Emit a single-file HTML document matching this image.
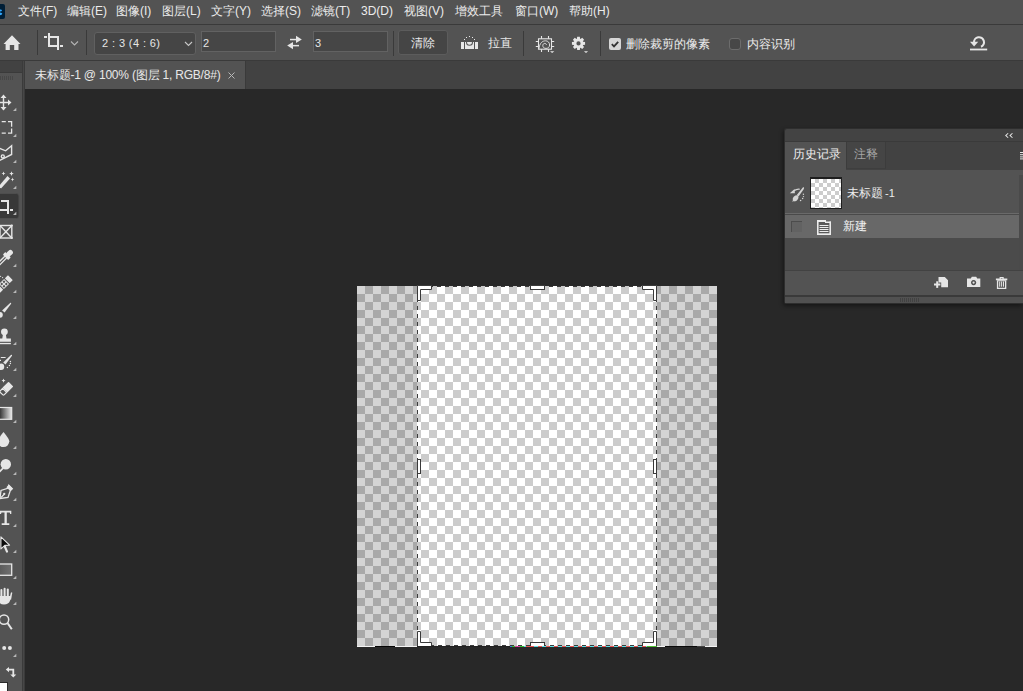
<!DOCTYPE html>
<html><head><meta charset="utf-8">
<style>
*{margin:0;padding:0;box-sizing:border-box}
html,body{width:1023px;height:691px;overflow:hidden;background:#282828;font-family:"Liberation Sans",sans-serif;color:#e6e6e6;font-weight:500}
.abs{position:absolute}
#menubar{position:absolute;left:0;top:0;width:1023px;height:25px;background:#535353;border-bottom:1px solid #3a3a3a}
#menubar span{position:absolute;top:3px;font-size:12px;line-height:16px;white-space:nowrap;color:#ececec}
#opts{position:absolute;left:0;top:25px;width:1023px;height:36px;background:#535353;border-bottom:1px solid #3a3a3a}
#tabs{position:absolute;left:0;top:61px;width:1023px;height:28px;background:#424242}
#tab1{position:absolute;left:25px;top:61px;width:221px;height:28px;background:#535353;border-right:1px solid #3a3a3a}
#tools{position:absolute;left:0;top:61px;width:25px;height:630px;background:#535353;border-right:3px solid #3b3b3b}
#tools:after{content:"";position:absolute;left:23px;top:0;width:1px;height:630px;background:#474747}
#toolshead{position:absolute;left:0;top:61px;width:22px;height:12px;background:#424242;border-bottom:1px solid #3a3a3a}
.div{position:absolute;width:1px;background:#3c3c3c}
.field{position:absolute;background:#454545;border:1px solid #3a3a3a;border-radius:2px}
.txt{position:absolute;white-space:nowrap;font-size:12px;line-height:16px}
</style></head><body>
<div id="menubar">
  <div class="abs" style="left:0;top:4px;width:5px;height:15px;background:#001e36;border-radius:0 2px 2px 0"></div><svg class="abs" style="left:0;top:0" width="6" height="24"><path d="M0,9.5 Q1.8,9.3 2,10.6 Q1.8,11.4 0,11.5 Z M0,12.4 Q2.3,12.6 2.3,13.8 Q2.1,15.2 0,15.2 Z" fill="#31a8ff"/></svg>
  <span style="left:18px">文件(F)</span>
  <span style="left:67px">编辑(E)</span>
  <span style="left:116px">图像(I)</span>
  <span style="left:162px">图层(L)</span>
  <span style="left:211px">文字(Y)</span>
  <span style="left:261px">选择(S)</span>
  <span style="left:311px">滤镜(T)</span>
  <span style="left:361px">3D(D)</span>
  <span style="left:404px">视图(V)</span>
  <span style="left:455px">增效工具</span>
  <span style="left:515px">窗口(W)</span>
  <span style="left:569px">帮助(H)</span>
</div>
<div id="opts">
  <svg class="abs" style="left:0;top:0" width="1023" height="36" viewBox="0 25 1023 36">
    <path d="M3.5,44 L12,35.3 L20.5,44 L18.5,44 L18.5,50 L14.2,50 L14.2,45 L9.8,45 L9.8,50 L5.6,50 L5.6,44 Z" fill="#e6e6e6"/>
    <rect x="37" y="30" width="1" height="25" fill="#3a3a3a"/>
    <g fill="#e6e6e6">
      <rect x="48" y="33" width="2" height="14"/><rect x="44" y="36" width="3" height="2"/><rect x="48" y="36" width="11" height="2"/>
      <rect x="57" y="36" width="2" height="14"/><rect x="48" y="45" width="9" height="2"/><rect x="60" y="45" width="3" height="2"/>
    </g>
    <path d="M71,41.5 L74.5,45 L78,41.5" stroke="#b4b4b4" stroke-width="1.1" fill="none"/>
    <rect x="86" y="30" width="1" height="25" fill="#3a3a3a"/>
    <path d="M185,42 L188.5,45.5 L192,42" stroke="#c8c8c8" stroke-width="1.1" fill="none"/>
    <g fill="#e6e6e6">
      <rect x="290" y="38.8" width="6.5" height="1.5"/><path d="M296,35.8 L301.8,39.5 L296,43 Z"/>
      <rect x="292.5" y="44.9" width="6.5" height="1.5"/><path d="M293,41.9 L287.2,45.6 L293,49.2 Z"/>
    </g>
    <g fill="#e8e8e8">
      <rect x="461" y="42" width="3" height="7"/><rect x="465" y="42" width="9" height="7"/><rect x="475" y="42" width="3" height="7"/>
      <rect x="464" y="39" width="1" height="1"/><rect x="466" y="37" width="1" height="1"/><rect x="469" y="36" width="1" height="1"/><rect x="472" y="37" width="1" height="1"/><rect x="474" y="39" width="1" height="1"/>
    </g>
    <path d="M466.5,42 Q466.5,45.3 469.5,45.3 Q472.5,45.3 472.5,42" stroke="#5a5a5a" stroke-width="1.1" fill="none"/>
    <g fill="none" stroke="#e6e6e6" stroke-width="1.1">
      <rect x="538.5" y="38.8" width="13" height="10.4"/>
      <path d="M535.8,41.5 H538.5 M535.8,46.5 H538.5 M551.5,41.5 H554.2 M551.5,46.5 H554.2 M541.5,35.9 V38.8 M548.5,35.9 V38.8 M541.5,49.2 V52 M548.5,49.2 V52"/>
      <path d="M538.9,49 C539.5,43 542.5,40.8 545.5,40.8 C548,40.8 549.6,42.6 549.6,45 C549.6,47.2 548,48.4 546,48.4 C544,48.4 542.8,47.2 542.8,45.5 C542.8,44.2 543.7,43.4 544.8,43.4 C545.8,43.4 546.4,44.1 546.4,45" stroke-width="1" stroke="#dcdcdc"/>
    </g>
    <path d="M550,51.2 L554.3,51.2 L552.15,53 Z" fill="#e6e6e6"/>
    <g fill="#e6e6e6">
      <path d="M583.03,41.80 L585.07,42.07 L585.07,44.73 L583.03,45.00 L582.83,45.47 L584.08,47.10 L582.20,48.98 L580.57,47.73 L580.10,47.93 L579.83,49.97 L577.17,49.97 L576.90,47.93 L576.43,47.73 L574.80,48.98 L572.92,47.10 L574.17,45.47 L573.97,45.00 L571.93,44.73 L571.93,42.07 L573.97,41.80 L574.17,41.33 L572.92,39.70 L574.80,37.82 L576.43,39.07 L576.90,38.87 L577.17,36.83 L579.83,36.83 L580.10,38.87 L580.57,39.07 L582.20,37.82 L584.08,39.70 L582.83,41.33 Z M580.60,43.40 A2.1,2.1 0 1 0 576.40,43.40 A2.1,2.1 0 1 0 580.60,43.40 Z" fill-rule="evenodd"/>
      <path d="M583.9,51.2 L588.1,51.2 L586,53 Z"/>
    </g>
    <rect x="393" y="31" width="1" height="25" fill="#3a3a3a"/>
    <rect x="523" y="31" width="1" height="25" fill="#3a3a3a"/>
    <rect x="600" y="31" width="1" height="25" fill="#3a3a3a"/>
    <path d="M974,42.5 A5,5 0 1 1 981,46.8" fill="none" stroke="#e6e6e6" stroke-width="2.1"/>
    <path d="M970,41.8 L978.2,41.8 L974.1,46.6 Z" fill="#e6e6e6"/>
    <rect x="970" y="48.6" width="17.2" height="1.8" fill="#e6e6e6"/>
  </svg>
  <div class="field" style="left:94px;top:7px;width:102px;height:23px;border-radius:3px;background:#454545;border-color:#606060"></div>
  <span class="txt" style="left:102px;top:10px;color:#e6e6e6;font-size:11px;letter-spacing:0.4px">2 : 3 (4 : 6)</span><svg class="abs" style="left:0;top:0" width="200" height="36" viewBox="0 25 200 36"><path d="M185,42 L188.5,45.5 L192,42" stroke="#c8c8c8" stroke-width="1.1" fill="none"/></svg>
  <div class="field" style="left:201px;top:6px;width:75px;height:21px;border-radius:0;background:#464646;border-color:#626262"></div>
  <span class="txt" style="left:203px;top:10px;color:#e6e6e6;font-size:11px">2</span>
  <div class="field" style="left:313px;top:6px;width:75px;height:21px;border-radius:0;background:#464646;border-color:#626262"></div>
  <span class="txt" style="left:315px;top:10px;color:#e6e6e6;font-size:11px">3</span>
  <div class="field" style="left:398px;top:5px;width:50px;height:25px;border-radius:3px;background:#454545;border:1.5px solid #5c5c5c"></div>
  <span class="txt" style="left:411px;top:10px;color:#ececec">清除</span>
  <span class="txt" style="left:488px;top:10px;color:#e6e6e6">拉直</span>
  <div class="abs" style="left:609px;top:13px;width:12px;height:12px;border-radius:2px;background:#d6d6d6"></div>
  <svg class="abs" style="left:609px;top:13px" width="12" height="12"><path d="M2.8,6.2 L5,8.4 L9.2,3.8" stroke="#333" stroke-width="1.8" fill="none"/></svg>
  <span class="txt" style="left:626px;top:11px;color:#ececec">删除裁剪的像素</span>
  <div class="abs" style="left:729px;top:13px;width:12px;height:12px;border-radius:3px;background:#474747;border:1.5px solid #6c6c6c"></div>
  <span class="txt" style="left:747px;top:11px;color:#ececec">内容识别</span>
</div>
<div id="tabs"></div>
<div id="tab1"><span class="txt" style="left:10px;top:6px;color:#e8e8e8;letter-spacing:-0.2px">未标题-1 @ 100% (图层 1, RGB/8#)</span><svg class="abs" style="left:202px;top:10px" width="10" height="10"><path d="M1.5,1.5 L7.5,7.5 M7.5,1.5 L1.5,7.5" stroke="#b8b8b8" stroke-width="1"/></svg></div>

<div class="abs" style="left:357px;top:286px;width:360px;height:360px;background:conic-gradient(#cccccc 25%,#ffffff 0 50%,#cccccc 0 75%,#ffffff 0) 0 0/16px 16px"></div>
<div class="abs" style="left:357px;top:286px;width:60px;height:360px;background:rgba(0,0,0,0.17)"></div>
<div class="abs" style="left:657px;top:286px;width:60px;height:360px;background:rgba(0,0,0,0.17)"></div>
<svg class="abs" style="left:0;top:0" width="1023" height="691">
  <g stroke="#3c3c3c" stroke-width="1" fill="none">
    <path d="M417.5,286 V646" stroke-dasharray="4 4" stroke-dashoffset="-4"/>
    <path d="M656.5,286 V646" stroke-dasharray="4 4" stroke-dashoffset="-4"/>
    <path d="M417,286.5 H657" stroke-dasharray="4 4" stroke-dashoffset="-4"/>
    <path d="M417,645.5 H657" stroke-dasharray="4 4" stroke-dashoffset="-5"/>
  </g>
  <g fill="#ffffff" stroke="#3a3a3a" stroke-width="1">
    <path d="M417.5,285.5 H431.5 V289.5 H420.5 V300.5 H417.5 Z"/>
    <path d="M656.5,285.5 H642.5 V289.5 H653.5 V300.5 H656.5 Z"/>
    <path d="M417.5,646.5 H431.5 V642.5 H420.5 V631.5 H417.5 Z"/>
    <path d="M656.5,646.5 H642.5 V642.5 H653.5 V631.5 H656.5 Z"/>
    <rect x="530.5" y="285.5" width="14" height="4"/>
    <rect x="530.5" y="642.5" width="14" height="4"/>
    <rect x="417.5" y="459.5" width="3" height="14"/>
    <rect x="653.5" y="459.5" width="3" height="14"/>
  </g>
</svg>

<div class="abs" style="left:784px;top:128px;width:239px;height:176px;background:#2e2e2e;border-radius:2px 0 0 2px;box-shadow:-1px 2px 4px rgba(0,0,0,0.45)"></div>
<div class="abs" style="left:785px;top:129px;width:238px;height:12px;background:#434343;border-radius:2px 0 0 0"></div>
<div class="abs" style="left:785px;top:141px;width:238px;height:1px;background:#3a3a3a"></div>
<div class="abs" style="left:785px;top:142px;width:238px;height:28px;background:#424242"></div>
<div class="abs" style="left:785px;top:142px;width:61px;height:28px;background:#535353"></div>
<div class="abs" style="left:846px;top:142px;width:40px;height:27px;background:#454545;border-left:1px solid #3c3c3c;border-right:1px solid #3c3c3c;border-bottom:1px solid #3e3e3e"></div>
<div class="abs" style="left:785px;top:170px;width:238px;height:100px;background:#535353"></div>
<div class="abs" style="left:1019px;top:175px;width:4px;height:95px;background:#4a4a4a"></div>
<div class="abs" style="left:785px;top:213px;width:234px;height:1px;background:#6a6a6a"></div>
<div class="abs" style="left:785px;top:214px;width:234px;height:1.5px;background:#4a4a4a"></div>
<div class="abs" style="left:785px;top:215px;width:234px;height:23px;background:#686868"></div>
<div class="abs" style="left:785px;top:238px;width:234px;height:32px;background:#4b4b4b"></div>
<div class="abs" style="left:785px;top:270px;width:238px;height:1px;background:#424242"></div>
<div class="abs" style="left:785px;top:271px;width:238px;height:24px;background:#535353"></div>
<div class="abs" style="left:785px;top:295px;width:238px;height:2px;background:#3a3a3a"></div>
<div class="abs" style="left:785px;top:297px;width:238px;height:6px;background:#515151"></div>
<span class="txt" style="left:793px;top:146px;color:#f0f0f0">历史记录</span>
<span class="txt" style="left:854px;top:146px;color:#a4a4a4">注释</span>
<span class="txt" style="left:847px;top:185px;color:#ececec">未标题<span style="font-size:11px;margin-left:2px">-1</span></span>
<span class="txt" style="left:843px;top:218px;color:#f2f2f2">新建</span>
<div class="abs" style="left:810px;top:177px;width:32px;height:32px;background:#1e1e1e"></div>
<div class="abs" style="left:811px;top:179px;width:30px;height:29px;background:conic-gradient(#cccccc 25%,#ffffff 0 50%,#cccccc 0 75%,#ffffff 0) 0 0/8px 8px"></div>
<div class="abs" style="left:791px;top:221px;width:11px;height:11px;background:#626262;border-top:1px solid #4c4c4c;border-left:1px solid #4c4c4c"></div>
<svg class="abs" style="left:0;top:0" width="1023" height="691">
  <g fill="#e6e6e6">
    <path d="M1005,135.5 L1007.8,132.9 L1008.5,133.6 L1006.5,135.5 L1008.5,137.4 L1007.8,138.1 Z"/>
    <path d="M1009.3,135.5 L1012.1,132.9 L1012.8,133.6 L1010.8,135.5 L1012.8,137.4 L1012.1,138.1 Z"/>
    <rect x="1020" y="152" width="3" height="1"/><rect x="1020" y="154.2" width="3" height="1"/><rect x="1020" y="156.4" width="3" height="1"/><rect x="1020" y="158.4" width="3" height="1"/>
  </g>
  <g fill="#d4d4d4">
    <path d="M803.2,187 Q804.6,187.6 803.8,189 L798.6,196.6 L796.6,195.2 Z"/>
    <ellipse cx="795.6" cy="198.2" rx="2.4" ry="3.2" transform="rotate(38 795.6 198.2)"/>
    <path d="M793.8,199.5 L791.8,201.6 L795.5,201 Z"/>
    <path d="M789.8,193.2 L794.6,189 L794.9,193.2 Z"/>
    <path d="M794,190.8 Q796.5,188.8 799.8,189.2" stroke="#d4d4d4" stroke-width="1.1" fill="none"/>
    <circle cx="803.4" cy="194.3" r="0.7"/><circle cx="803.5" cy="196.6" r="0.7"/><circle cx="802.6" cy="198.5" r="0.75"/><circle cx="800.6" cy="200.5" r="0.8"/>
  </g>
  <g>
    <rect x="817" y="221.5" width="14" height="13.5" fill="#5a5a5a"/>
    <g fill="#ececec"><rect x="817" y="220" width="9" height="2"/><rect x="825" y="221.5" width="6" height="1.5"/><rect x="817" y="220" width="1.6" height="15"/><rect x="829.4" y="221.5" width="1.6" height="13.5"/><rect x="817" y="233.3" width="14" height="1.7"/>
    <rect x="819.5" y="225" width="9" height="1"/><rect x="819.5" y="227" width="9" height="1"/><rect x="819.5" y="229" width="9" height="1"/><rect x="819.5" y="231" width="9" height="1"/></g>
  </g>
  <g fill="#e6e6e6">
    <path d="M938.5,277 H944.8 L948,280.2 V287.2 H941.2 V282.6 H938.5 Z"/>
    <rect x="934" y="283.5" width="6.4" height="2"/><rect x="936.2" y="281.3" width="2" height="6.6"/>
    <path d="M967,278.6 H970.8 L971.8,276.8 H976.2 L977.2,278.6 H980.3 V287.1 H967 Z M973.6,280 A2.6,2.6 0 1 0 973.61,280 Z" fill-rule="evenodd"/>
    <circle cx="973.6" cy="282.6" r="1.1"/>
    <path d="M999.6,276.9 H1003.7 V278.6 H1007.3 V280.2 H995.9 V278.6 H999.6 Z M1000.8,277.9 V278.6 H1002.5 V277.9 Z" fill-rule="evenodd"/>
    <path d="M996.9,280.2 H1006.3 V289 H996.9 Z M998.2,281.3 V287.8 H1005 V281.3 Z" fill-rule="evenodd"/>
    <rect x="999.2" y="281.5" width="1" height="5.2"/><rect x="1001.1" y="281.5" width="1" height="5.2"/><rect x="1003" y="281.5" width="1" height="5.2"/>
  </g>
  <g fill="#424242">
    <rect x="900" y="298" width="1" height="4"/><rect x="902" y="298" width="1" height="4"/><rect x="904" y="298" width="1" height="4"/><rect x="906" y="298" width="1" height="4"/>
    <rect x="908" y="298" width="1" height="4"/><rect x="910" y="298" width="1" height="4"/><rect x="912" y="298" width="1" height="4"/><rect x="914" y="298" width="1" height="4"/><rect x="916" y="298" width="1" height="4"/><rect x="918" y="298" width="1" height="4"/>
  </g>
</svg>
<svg class="abs" style="left:0;top:0" width="1023" height="691"><rect x="357" y="646" width="18" height="1" fill="#f4f4f4"/><rect x="375" y="646" width="20" height="1" fill="#050505"/><rect x="395" y="646" width="22" height="1" fill="#f4f4f4"/><rect x="657" y="646" width="8" height="1" fill="#f4f4f4"/><rect x="665" y="646" width="32" height="1" fill="#0a0a0a"/><rect x="697" y="646" width="8" height="1" fill="#444"/><rect x="705" y="646" width="12" height="1" fill="#f4f4f4"/><rect x="417" y="646" width="93" height="1" fill="#202020"/><rect x="510" y="646" width="2" height="1" fill="#3a7bd5"/><rect x="512" y="646" width="3" height="1" fill="#38c038"/><rect x="515" y="646" width="5" height="1" fill="#e040a0"/><rect x="520" y="646" width="4" height="1" fill="#38c038"/><rect x="524" y="646" width="2" height="1" fill="#5ce0e6"/><rect x="526" y="646" width="4" height="1" fill="#e85454"/><rect x="530" y="646" width="4" height="1" fill="#e85454"/><rect x="534" y="646" width="4" height="1" fill="#5ce0e6"/><rect x="538" y="646" width="4" height="1" fill="#e85454"/><rect x="542" y="646" width="4" height="1" fill="#5ce0e6"/><rect x="546" y="646" width="4" height="1" fill="#e85454"/><rect x="550" y="646" width="4" height="1" fill="#5ce0e6"/><rect x="554" y="646" width="4" height="1" fill="#e85454"/><rect x="558" y="646" width="4" height="1" fill="#5ce0e6"/><rect x="562" y="646" width="4" height="1" fill="#e85454"/><rect x="566" y="646" width="4" height="1" fill="#5ce0e6"/><rect x="570" y="646" width="4" height="1" fill="#e85454"/><rect x="574" y="646" width="4" height="1" fill="#5ce0e6"/><rect x="578" y="646" width="4" height="1" fill="#e85454"/><rect x="582" y="646" width="4" height="1" fill="#5ce0e6"/><rect x="586" y="646" width="4" height="1" fill="#e85454"/><rect x="590" y="646" width="4" height="1" fill="#5ce0e6"/><rect x="594" y="646" width="4" height="1" fill="#e85454"/><rect x="598" y="646" width="4" height="1" fill="#5ce0e6"/><rect x="602" y="646" width="4" height="1" fill="#e85454"/><rect x="606" y="646" width="4" height="1" fill="#5ce0e6"/><rect x="610" y="646" width="4" height="1" fill="#e85454"/><rect x="614" y="646" width="4" height="1" fill="#5ce0e6"/><rect x="618" y="646" width="4" height="1" fill="#e85454"/><rect x="622" y="646" width="4" height="1" fill="#5ce0e6"/><rect x="626" y="646" width="4" height="1" fill="#e85454"/><rect x="630" y="646" width="4" height="1" fill="#5ce0e6"/><rect x="634" y="646" width="4" height="1" fill="#e85454"/><rect x="638" y="646" width="4" height="1" fill="#5ce0e6"/><rect x="642" y="646" width="4" height="1" fill="#e85454"/><rect x="646" y="646" width="4" height="1" fill="#5ce0e6"/><rect x="647" y="646" width="10" height="1" fill="#4cc030"/></svg>
<div id="tools"></div>
<div id="toolshead"></div>
<svg class="abs" style="left:0;top:0" width="24" height="691">
  <g fill="#474747"><rect x="0" y="76" width="1" height="4"/><rect x="2" y="76" width="1" height="4"/><rect x="4" y="76" width="1" height="4"/><rect x="6" y="76" width="1" height="4"/><rect x="8" y="76" width="1" height="4"/><rect x="10" y="76" width="1" height="4"/><rect x="12" y="76" width="1" height="4"/></g>
  <rect x="-3.5" y="193.5" width="22.5" height="25" rx="2.5" fill="#383838" stroke="#4e4e4e" stroke-width="1"/>
  <g fill="#b8b8b8"><path d="M16.3,111 L16.3,107.7 L13,111 Z"/><path d="M16.3,137 L16.3,133.7 L13,137 Z"/><path d="M16.3,163 L16.3,159.7 L13,163 Z"/><path d="M16.3,189 L16.3,185.7 L13,189 Z"/><path d="M16.3,215 L16.3,211.7 L13,215 Z"/><path d="M16.3,267 L16.3,263.7 L13,267 Z"/><path d="M16.3,293 L16.3,289.7 L13,293 Z"/><path d="M16.3,319 L16.3,315.7 L13,319 Z"/><path d="M16.3,345 L16.3,341.7 L13,345 Z"/><path d="M16.3,371 L16.3,367.7 L13,371 Z"/><path d="M16.3,397 L16.3,393.7 L13,397 Z"/><path d="M16.3,423 L16.3,419.7 L13,423 Z"/><path d="M16.3,449 L16.3,445.7 L13,449 Z"/><path d="M16.3,475 L16.3,471.7 L13,475 Z"/><path d="M16.3,501 L16.3,497.7 L13,501 Z"/><path d="M16.3,527 L16.3,523.7 L13,527 Z"/><path d="M16.3,553 L16.3,549.7 L13,553 Z"/><path d="M16.3,579 L16.3,575.7 L13,579 Z"/><path d="M16.3,605 L16.3,601.7 L13,605 Z"/><path d="M16.3,657 L16.3,653.7 L13,657 Z"/></g>
  <g fill="none" stroke="#e6e6e6" stroke-width="1.4">
    <path d="M3.5,96.5 V109.5 M-4,102.5 H10"/>
    <path d="M1.7,121.7 H5.8 M8,121.7 H11.6 V126.8 M11.6,128.5 V133.2 H8 M5.8,133.2 H1.7" stroke-width="1.3"/>
    <path d="M-0.5,148.3 L5.6,150.8 L11.6,145.8 V154.5 L-1,160.8"/>
    <circle cx="2.8" cy="156.4" r="1.5"/>
    
    <rect x="0" y="225.5" width="11.8" height="12.5"/>
    <path d="M0,225.5 L11.8,238 M11.8,225.5 L0,238"/>
    <path d="M0.8,357.5 H5.6 M-1,360.4 H1" stroke-width="1.1"/>
  </g>
  <g fill="#e6e6e6">
    <path d="M3.5,94.5 L6.5,98 H0.5 Z M3.5,110.5 L6.5,107 H0.5 Z M11.5,102.5 L8,99.5 V105.5 Z"/>
    <path d="M-1,186 L7.5,176 L10,178.5 L1,188.5 Z"/>
    <path d="M3.5,171.5 L4.1,173 L5.5,173.5 L4.1,174 L3.5,175.5 L2.9,174 L1.5,173.5 L2.9,173 Z"/>
    <path d="M11.5,171.3 L12.2,173 L13.8,173.6 L12.2,174.2 L11.5,176 L10.8,174.2 L9.2,173.6 L10.8,173 Z"/>
    <path d="M12.5,177.6 L13,179 L14.3,179.5 L13,180 L12.5,181.4 L12,180 L10.7,179.5 L12,179 Z"/>
    <rect x="1" y="200" width="8" height="2"/><rect x="7" y="200" width="2" height="14"/><rect x="0" y="209" width="7" height="2"/><rect x="10" y="209" width="3" height="2"/>
    <circle cx="11.8" cy="225.5" r="1.1"/><circle cx="11.8" cy="238" r="1.1"/>
    <g transform="translate(6.8,256) rotate(45)"><rect x="-3.8" y="-1.8" width="7.6" height="3.6" rx="0.8"/><rect x="-2.5" y="-7.6" width="5" height="7" rx="2.5"/><path d="M-1.9,1.5 H1.9 V12 L0,13.5 L-1.9,12 Z M-0.6,1.5 V11.5 H0.6 V1.5 Z" fill-rule="evenodd"/></g>
    <g transform="translate(4,284) rotate(45)"><rect x="-3.4" y="-9" width="6.8" height="4.4" rx="0.5"/><path d="M-3.5,-3.6 H3.5 V3.6 H-3.5 Z M-2.6,-2.6 V-0.6 H-0.6 V-2.6 Z M0.6,-2.6 V-0.6 H2.6 V-2.6 Z M-2.6,0.6 V2.6 H-0.6 V0.6 Z M0.6,0.6 V2.6 H2.6 V0.6 Z" fill-rule="evenodd"/><rect x="-3.4" y="4.6" width="6.8" height="4.4" rx="0.5"/></g>
    <circle cx="0.6" cy="276.3" r="0.6"/><circle cx="2.6" cy="277.6" r="0.6"/>
    <path d="M10.4,302.7 Q11.4,302.6 11.1,303.7 L4.6,312.6 L2.1,310.4 Z"/><circle cx="-0.1" cy="314.8" r="2.9"/>
    <circle cx="4.4" cy="331.8" r="3.4"/>
    <path d="M3,334 H5.8 L6.5,338.5 H10.9 V341.8 H0 V338.5 H2.3 Z"/>
    <rect x="0" y="342.9" width="10.9" height="1.3"/>
    <path d="M11.2,354.7 Q12.4,354.6 12,355.8 L5.5,364.6 L3.2,362.5 Z"/><ellipse cx="1.2" cy="366.8" rx="3" ry="3.3"/>
    <circle cx="10.4" cy="361.5" r="0.7"/><circle cx="10.4" cy="363.5" r="0.7"/><circle cx="9.4" cy="365.5" r="0.7"/><circle cx="7.4" cy="367.5" r="0.7"/>
    <path d="M3.5,378.5 L4.1,380 L5.5,380.6 L4.1,381.2 L3.5,382.8 L2.9,381.2 L1.5,380.6 L2.9,380 Z"/>
    <g transform="translate(6,389) rotate(45)"><rect x="-3.4" y="-7" width="6.8" height="8.5" rx="0.8"/><path d="M-2.8,2 H2.8 V5.6 Q2.8,6.4 2,6.4 H-2 Q-2.8,6.4 -2.8,5.6 Z" fill="none" stroke="#e6e6e6" stroke-width="1.2"/></g>
    
    <path d="M3.5,432 Q9.3,439 9.3,441.3 A5.8,5.8 0 0 1 -2.3,441.3 Q-2.3,439 3.5,432 Z"/>
    <circle cx="5.8" cy="464.2" r="5.2"/>
    <path d="M2.5,467.5 L3.7,468.7 L0,472.5 L-1.2,471.3 Z"/>
    <path d="M0,510.8 H11.3 V514 H10.2 L9.8,512.6 H6.8 V523.2 H9.3 V525 H1.7 V523.2 H4.5 V512.6 H1.5 L1,514 H0 Z"/>
    <path d="M0.5,482 h7.5 v2.8 h4.3 v7.5 h-2.8 v4.3 h-7.5 Z" fill="none"/>
  </g>
  <g fill="none" stroke="#e6e6e6" stroke-width="1.3">
    <path d="M8.8,485.2 L12.3,488.7 L10.2,490.8 L8,497.5 L0,498.5 L1,490.5 L7.7,488.3 Z"/>
    <path d="M1,497.5 L5,493.5"/>
  </g>
  <g>
    <circle cx="4.2" cy="493.8" r="1.1" fill="#e6e6e6"/><path d="M8.8,484.8 L12.6,488.6 L10.2,491 L6.4,487.2 Z" fill="#e6e6e6"/>
  </g>
  <path d="M4.6,546 L7,551.6" stroke="#e6e6e6" stroke-width="2.2" stroke-linecap="round"/><path d="M0.9,536.8 L9.6,545.2 L4.8,545.4 L0.9,548.9 Z" fill="#0a0a0a" stroke="#e6e6e6" stroke-width="1.1" stroke-linejoin="round"/>
  <defs><linearGradient id="gr" x1="0" x2="1"><stop offset="0" stop-color="#2a2a2a"/><stop offset="1" stop-color="#e8e8e8"/></linearGradient>
  <linearGradient id="rg" x1="0" x2="1"><stop offset="0" stop-color="#5a5a5a"/><stop offset="1" stop-color="#707070"/></linearGradient></defs>
  <rect x="-1" y="407.5" width="12.7" height="11.8" fill="url(#gr)" stroke="#e6e6e6" stroke-width="1.2"/>
  <rect x="-1" y="564" width="12.7" height="11.3" fill="url(#rg)" stroke="#e6e6e6" stroke-width="1.3"/>
  <g fill="#e6e6e6">
    <rect x="0.4" y="589" width="2" height="9" rx="1"/><rect x="3.6" y="587.8" width="2" height="10" rx="1"/><rect x="6.8" y="588.5" width="2" height="10" rx="1"/><path d="M9.4,598.5 L10.9,592.8 Q11.6,591.8 12.3,592.8 L11,600 Z"/><path d="M-1,596 H10.3 Q11.2,598 10,600.8 Q8.6,604.6 4,604.6 Q-1,604.6 -1,600 Z"/>
    <circle cx="4.2" cy="648.1" r="2"/><circle cx="9.9" cy="648.1" r="2"/>
    <path d="M5.8,669.5 L9,667 V668.8 H14.2 V674.5 H16.3 L13.3,677.5 L10.3,674.5 H12.4 V670.5 H9 V672.2 Z"/>
  </g>
  <g fill="none" stroke="#e6e6e6" stroke-width="1.5">
    <circle cx="4" cy="619.6" r="4.7"/>
    <path d="M7.5,623 L11.8,629.3" stroke-width="2"/>
  </g>
  <rect x="-1" y="682.5" width="8.5" height="10" fill="#ffffff" stroke="#2a2a2a" stroke-width="1"/>
</svg>

</body></html>
